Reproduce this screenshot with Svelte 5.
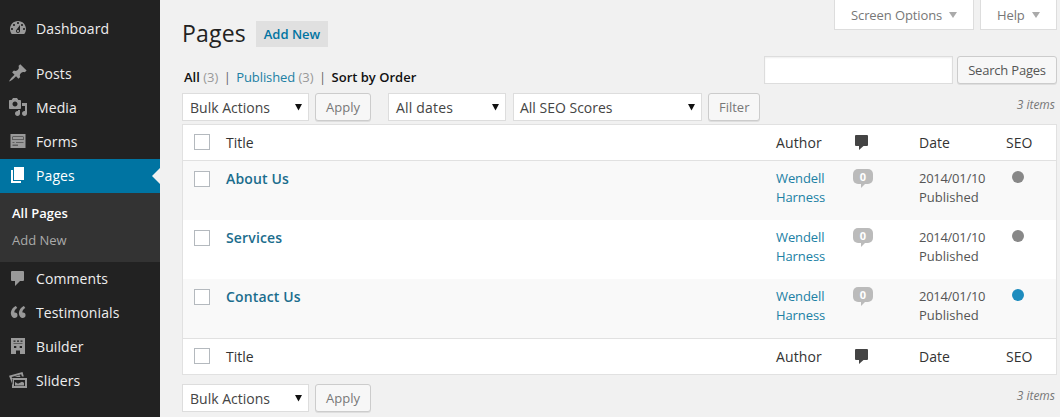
<script lang="ts">
  interface MenuItem {
    label: string;
    icon: string;
    separator?: boolean;
    current?: boolean;
  }

  interface PageRow {
    title: string;
    score: string;
  }

  const icons: Record<string, string> = {
    dashboard:
      'M3.76 16h12.48c1.1-1.37 1.76-3.11 1.76-5 0-4.42-3.58-8-8-8s-8 3.58-8 8c0 1.89.66 3.63 1.76 5zM10 4c.55 0 1 .45 1 1s-.45 1-1 1-1-.45-1-1 .45-1 1-1zM6 6c.55 0 1 .45 1 1s-.45 1-1 1-1-.45-1-1 .45-1 1-1zm8 0c.55 0 1 .45 1 1s-.45 1-1 1-1-.45-1-1 .45-1 1-1zm-5.37 5.55L12 7v6c0 1.1-.9 2-2 2s-2-.9-2-2c0-.57.24-1.08.63-1.45zM4 10c.55 0 1 .45 1 1s-.45 1-1 1-1-.45-1-1 .45-1 1-1zm12 0c.55 0 1 .45 1 1s-.45 1-1 1-1-.45-1-1 .45-1 1-1zm-5 3c0-.55-.45-1-1-1s-1 .45-1 1 .45 1 1 1 1-.45 1-1z',
    posts:
      'M10.44 3.02l1.82-1.82 6.36 6.35-1.83 1.82c-1.05-.68-2.48-.57-3.41.36l-.75.75c-.92.93-1.04 2.35-.35 3.41l-1.83 1.82-2.41-2.41-2.8 2.79c-.42.42-3.38 2.71-3.8 2.29s1.86-3.39 2.28-3.81l2.79-2.79L4.1 9.36l1.83-1.82c1.05.69 2.48.57 3.4-.36l.75-.75c.93-.92 1.05-2.35.36-3.41z',
    media:
      'M13 11V4c0-.55-.45-1-1-1h-1.67L9 1H5L3.67 3H2c-.55 0-1 .45-1 1v7c0 .55.45 1 1 1h10c.55 0 1-.45 1-1zM7 4.5c1.38 0 2.5 1.12 2.5 2.5S8.38 9.5 7 9.5 4.5 8.38 4.5 7 5.62 4.5 7 4.5zM14 6h5v10.5c0 1.38-1.12 2.5-2.5 2.5S14 17.88 14 16.5s1.12-2.5 2.5-2.5c.17 0 .34.02.5.05V9h-3V6zm-4 8.05V13h2v3.5c0 1.38-1.12 2.5-2.5 2.5S7 17.88 7 16.5 8.12 14 9.5 14c.17 0 .34.02.5.05z',
    forms:
      'M2.500 3h15v14h-15zM4.500 5.500v.5h11v-.5zM4.500 6v2.500h.5V6zM15 6v2.500h.5V6zM4.500 8.500v.5h11v-.5zM4.500 11v.6h2V11zM8 11v.6h7.500V11zM4.500 13.700v.8h5.500v-.8z',
    pages: 'M6 15V2h10v13H6zm-1 1h8v2H3V5h2v11z',
    comments:
      'M4 3h11q1 0 1 1v8q0 1-1 1h-3l-5 5v-5H4q-1 0-1-1V4q0-1 1-1z',
    quote:
      'M9.49 13.22c0-.74-.2-1.38-.61-1.9-.62-.78-1.83-.88-2.53-.72-.29-1.65 1.11-3.75 2.92-4.65L7.88 4c-2.73 1.3-5.42 4.28-4.96 8.05C3.21 14.43 4.59 16 6.54 16c.85 0 1.56-.25 2.12-.75s.83-1.18.83-2.03zm8.05 0c0-.74-.2-1.38-.61-1.9-.63-.78-1.83-.88-2.53-.72-.29-1.65 1.11-3.75 2.92-4.65L15.93 4c-2.73 1.3-5.41 4.28-4.95 8.05.29 2.38 1.66 3.95 3.61 3.95.85 0 1.56-.25 2.12-.75s.83-1.18.83-2.03z',
    builder:
      'M3 2h14v16h-5v-3.500H8V18H3zM5.500 4.500v1.200h2V4.500zM9 4.500v1.200h2V4.500zM12.500 4.500v1.200h2V4.500zM5.500 7.500v.6h9v-.6zM6 10v2h2.300v-2zM11.700 10v2H14v-2z',
    sliders:
      'M1 5.800L14.500 2l1.300 4.500h-1.900l-.7-2.200L3.600 7l1 2.500v5.500zM6.500 7l5-1.700L12.600 7zM4 8h15v10H4zM6 10v6h11v-6zM7 15.500V12l3 1.800 4-2 2 1v2.700z',
  };

  const menu: MenuItem[] = [
    { label: 'Dashboard', icon: 'dashboard' },
    { label: 'Posts', icon: 'posts', separator: true },
    { label: 'Media', icon: 'media' },
    { label: 'Forms', icon: 'forms' },
    { label: 'Pages', icon: 'pages', current: true },
    { label: 'Comments', icon: 'comments' },
    { label: 'Testimonials', icon: 'quote' },
    { label: 'Builder', icon: 'builder' },
    { label: 'Sliders', icon: 'sliders' },
  ];

  const rows: PageRow[] = [
    { title: 'About Us', score: 'na' },
    { title: 'Services', score: 'na' },
    { title: 'Contact Us', score: 'noindex' },
  ];

  let search = $state('');
</script>

{#snippet icon(name: string)}
  <svg class="icon" viewBox="0 0 20 20" width="20" height="20">
    <path fill-rule="evenodd" d={icons[name]} />
  </svg>
{/snippet}

{#snippet dropdown(label: string, size: string)}
  <div class="select {size}">
    <span>{label}</span>
    <svg viewBox="0 0 7 7" width="7" height="7"><path d="M0 0h7L3.500 6.500z" /></svg>
  </div>
{/snippet}

{#snippet headings()}
  <div class="row heading">
    <span class="check"><i class="box"></i></span>
    <span>Title</span>
    <span class="author">Author</span>
    <svg class="bubble-icon" viewBox="0 0 13 15" width="13" height="15">
      <path d="M1 0h11q1 0 1 1v9q0 1-1 1H8.500L4 15V11H1q-1 0-1-1V1q0-1 1-1z" />
    </svg>
    <span>Date</span>
    <span>SEO</span>
  </div>
{/snippet}

<div class="admin">
  <nav class="menu">
    {#each menu as item}
      <a class="item" class:separator={item.separator} class:current={item.current} href="#top">
        {@render icon(item.icon)}
        <span>{item.label}</span>
      </a>
      {#if item.current}
        <div class="submenu">
          <a class="active" href="#top">All Pages</a>
          <a href="#top">Add New</a>
        </div>
      {/if}
    {/each}
  </nav>

  <main>
    <div class="top">
      <div class="title">
        <h1>Pages</h1>
        <a class="add-new" href="#top">Add New</a>
      </div>
      <div class="screen-meta">
        <button class="meta options">Screen Options <i class="caret"></i></button>
        <button class="meta help">Help <i class="caret"></i></button>
      </div>
    </div>

    <div class="filters">
      <div class="views">
        <b>All</b> <span class="count">(3)</span> <span class="pipe">|</span>
        <a href="#top">Published</a> <span class="count">(3)</span> <span class="pipe">|</span>
        <b class="sort">Sort by Order</b>
      </div>
      <div class="search">
        <input type="text" bind:value={search} />
        <button class="btn dark">Search Pages</button>
      </div>
    </div>

    <div class="tablenav">
      {@render dropdown('Bulk Actions', 'bulk')}
      <button class="btn apply">Apply</button>
      {@render dropdown('All dates', 'dates')}
      {@render dropdown('All SEO Scores', 'scores')}
      <button class="btn">Filter</button>
      <span class="items">3 items</span>
    </div>

    <div class="table">
      {@render headings()}
      {#each rows as row}
        <div class="row entry">
          <span class="check"><i class="box"></i></span>
          <a class="row-title" href="#top">{row.title}</a>
          <a class="author" href="#top">Wendell Harness</a>
          <span class="bubble">0</span>
          <span class="date"><span class="day">2014/01/10</span><br />Published</span>
          <i class="dot {row.score}"></i>
        </div>
      {/each}
      {@render headings()}
    </div>

    <div class="tablenav bottom">
      {@render dropdown('Bulk Actions', 'bulk')}
      <button class="btn apply">Apply</button>
      <span class="items">3 items</span>
    </div>
  </main>
</div>

<style>
  :global(body) {
    background: #f1f1f1;
    overflow: hidden;
  }

  .admin {
    display: flex;
    height: 417px;
    font: 13px/19px 'Open Sans', sans-serif;
    color: #444;
  }
  .admin * { box-sizing: border-box; }
  a { color: #2080a4; text-decoration: none; }
  button, input { font-family: inherit; margin: 0; }

  /* Sidebar */
  .menu {
    flex: none;
    width: 160px;
    padding-top: 12px;
    background: #222;
  }
  .item {
    position: relative;
    display: flex;
    align-items: center;
    gap: 8px;
    height: 34px;
    padding: 0 0 2px 8px;
    color: #eee;
    font-size: 14px;
    letter-spacing: 0.1px;
  }
  .icon { flex: none; fill: #999; }
  .separator { margin-top: 11px; }
  .current { background: #0074a2; color: #fff; }
  .current .icon { fill: #fff; }
  .current::after {
    content: '';
    position: absolute;
    right: 0;
    top: 9px;
    border: 8px solid transparent;
    border-left: 0;
    border-right-color: #f1f1f1;
  }
  .submenu {
    height: 69px;
    padding: 7px 12px;
    background: #333;
  }
  .submenu a {
    display: block;
    height: 27px;
    line-height: 27px;
    color: #aaa;
  }
  .submenu .active { color: #fff; font-weight: 600; }

  /* Content */
  main {
    flex: 1;
    padding: 0 3px 0 22px;
  }
  .top {
    display: flex;
    justify-content: space-between;
    height: 56px;
  }
  .title { display: flex; align-items: flex-start; }
  h1 {
    margin: 19px 10px 0 0;
    color: #222;
    font-size: 23px;
    font-weight: 400;
    line-height: 29px;
    letter-spacing: 0.2px;
  }
  .add-new {
    margin-top: 21px;
    width: 72px;
    height: 26px;
    background: #e0e0e0;
    color: #0074a2;
    font-weight: 600;
    line-height: 26px;
    text-align: center;
  }
  .screen-meta { display: flex; gap: 6px; }
  .meta {
    display: flex;
    align-items: center;
    justify-content: space-between;
    height: 30px;
    padding: 0 16px;
    border: 1px solid #ddd;
    border-top: 0;
    background: #fff;
    color: #777;
    font-size: 13px;
    letter-spacing: -0.1px;
  }
  .options { width: 140px; }
  .help { width: 77px; }
  .caret {
    border: 4.500px solid transparent;
    border-top: 6px solid #aaa;
    border-bottom: 0;
  }

  .filters {
    display: flex;
    justify-content: space-between;
    height: 37px;
  }
  .views { padding: 12px 0 0 2px; color: #222; white-space: nowrap; }
  .views a { letter-spacing: -0.1px; }
  .views b { color: #111; font-weight: 600; }
  .count { color: #999; }
  .pipe { margin: 0 2px; color: #666; }
  .search { display: flex; gap: 4px; }
  .search input {
    width: 189px;
    height: 28px;
    border: 1px solid #ddd;
    box-shadow: inset 0 1px 2px rgba(0, 0, 0, 0.07);
    background: #fff;
  }
  .btn {
    height: 28px;
    padding: 0 10px;
    border: 1px solid #ccc;
    border-radius: 3px;
    background: #f7f7f7;
    box-shadow: 0 1px 0 rgba(0, 0, 0, 0.08);
    color: #777;
    font-size: 13px;
    line-height: 26px;
  }
  .dark { width: 100px; padding: 0; color: #555; letter-spacing: -0.2px; }

  .tablenav {
    display: flex;
    height: 31px;
  }
  .bottom { margin-top: 9px; }
  .select {
    display: flex;
    align-items: center;
    justify-content: space-between;
    height: 28px;
    padding: 0 6px 0 7px;
    border: 1px solid #ddd;
    background: #fff;
    color: #444;
    font-size: 14px;
  }
  .select svg { fill: #111; }
  .bulk { width: 127px; margin-right: 6px; }
  .apply { margin-right: 17px; }
  .dates { width: 118px; margin-right: 7px; }
  .dates span { letter-spacing: 0.2px; }
  .scores { width: 189px; margin-right: 6px; padding-left: 6px; }
  .items {
    margin: 2px 2px 0 auto;
    color: #777;
    font-size: 12px;
    font-style: italic;
  }

  .table {
    border: 1px solid #e1e1e1;
    background: #fff;
  }
  .row {
    display: grid;
    grid-template-columns: 43px 550px 76px 67px 87px 1fr;
  }
  .heading {
    height: 36px;
    padding-bottom: 1px;
    align-items: center;
    color: #333;
    font-size: 14px;
  }
  .heading .author { letter-spacing: 0.1px; }
  .heading:first-child { border-bottom: 1px solid #e1e1e1; }
  .heading:last-child { border-top: 1px solid #e1e1e1; }
  .check { padding-left: 11px; }
  .box {
    display: block;
    width: 16px;
    height: 16px;
    border: 1px solid #b4b9be;
    background: #fff;
  }
  .bubble-icon { margin: 1px 0 0 3px; fill: #444; }

  .entry { height: 59px; padding-top: 8px; align-items: start; }
  .entry:nth-child(even) { background: #f9f9f9; }
  .entry .check { padding-top: 2px; }
  .row-title {
    color: #1b6d8d;
    font-size: 14px;
    font-weight: 600;
    letter-spacing: 0.15px;
  }
  .entry .author { width: 60px; letter-spacing: -0.1px; }
  .date { color: #555; }
  .day { letter-spacing: -0.28px; }
  .bubble {
    position: relative;
    width: 20px;
    height: 15px;
    margin-left: 1px;
    border-radius: 5px;
    background: #bbb;
    color: #fff;
    font-size: 11px;
    font-weight: 700;
    line-height: 15px;
    text-align: center;
  }
  .bubble::after {
    content: '';
    position: absolute;
    left: 8px;
    top: 15px;
    border-top: 4px solid #bbb;
    border-right: 4px solid transparent;
  }
  .dot {
    width: 12px;
    height: 12px;
    margin: 2px 0 0 6px;
    border-radius: 50%;
    background: #888;
  }
  .noindex { background: #1e8cbe; }
</style>
